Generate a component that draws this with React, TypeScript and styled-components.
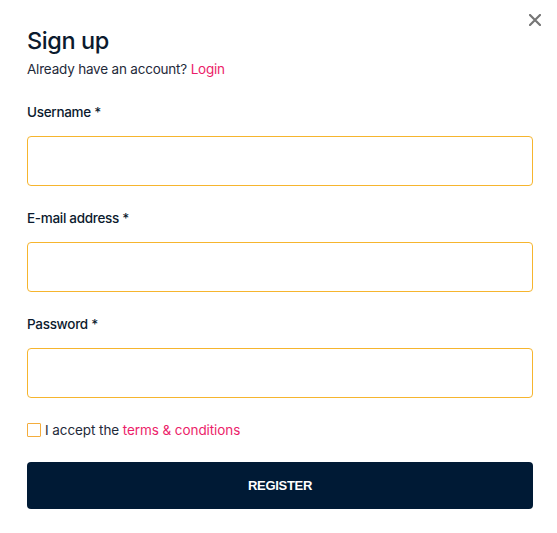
import React from 'react';
import styled, { createGlobalStyle } from 'styled-components';

const GlobalStyle = createGlobalStyle`
  html, body {
    margin: 0;
    padding: 0;
    background: #ffffff;
  }
  body {
    font-family: Inter, "Noto Sans", Arial, sans-serif;
    color: #0b1a2e;
  }
`;

const Modal = styled.div`
  position: relative;
  width: 557px;
  height: 533px;
  box-sizing: border-box;
  padding: 26px 24px 0 27px;
  background: #fff;
`;

const CloseButton = styled.button`
  position: absolute;
  top: 12px;
  right: 14px;
  width: 16px;
  height: 16px;
  padding: 0;
  border: none;
  background: transparent;
  display: flex;
  align-items: center;
  justify-content: center;
  cursor: pointer;
`;

const Title = styled.h1`
  margin: 0;
  font-size: 23.5px;
  font-weight: 500;
  line-height: 30px;
  color: #0b1a2e;
  letter-spacing: -0.4px;
`;

const Subtitle = styled.p`
  margin: 3px 0 0;
  font-size: 13.5px;
  line-height: 20px;
  letter-spacing: -0.2px;
  color: #1f2a3a;
`;

const PinkLink = styled.a`
  color: #ec1e6a;
  text-decoration: none;
  cursor: pointer;
`;

const Form = styled.form`
  display: flex;
  flex-direction: column;
  margin-top: 23px;
`;

const Field = styled.div`
  display: flex;
  flex-direction: column;
  gap: 14px;
  margin-bottom: 22px;
`;

const Label = styled.label`
  font-size: 13.5px;
  font-weight: 500;
  line-height: 20px;
  letter-spacing: -0.3px;
  color: #0b1a2e;
`;

const Input = styled.input`
  box-sizing: border-box;
  width: 100%;
  height: 50px;
  border: 1px solid #f6b52e;
  border-radius: 4px;
  padding: 0 12px;
  font-size: 14px;
  font-family: inherit;
  outline: none;
`;

const CheckRow = styled.label`
  display: flex;
  align-items: center;
  gap: 4px;
  font-size: 13.5px;
  line-height: 20px;
  letter-spacing: -0.08px;
  color: #1f2a3a;
`;

const Box = styled.span`
  display: inline-block;
  box-sizing: border-box;
  width: 14px;
  height: 14px;
  border: 1px solid #f4ad3d;
  border-radius: 1px;
  background: #fff;
`;

const RegisterButton = styled.button`
  margin-top: 22px;
  height: 47px;
  width: 100%;
  border: none;
  border-radius: 4px;
  background: #001a35;
  color: #ffffff;
  font-family: "Liberation Sans", Arial, sans-serif;
  font-size: 13px;
  font-weight: 700;
  letter-spacing: -0.3px;
  cursor: pointer;
`;

const fields = [
  { id: 'username', label: 'Username *', type: 'text' },
  { id: 'email', label: 'E-mail address *', type: 'email' },
  { id: 'password', label: 'Password *', type: 'password' },
];

export default function App() {
  return (
    <>
      <GlobalStyle />
      <Modal>
        <CloseButton aria-label="Close">
          <svg width="12" height="12" viewBox="0 0 12 12">
            <path d="M1 1 L11 11 M11 1 L1 11" stroke="#767676" strokeWidth="2.2" strokeLinecap="round" />
          </svg>
        </CloseButton>
        <Title>Sign up</Title>
        <Subtitle>
          Already have an account? <PinkLink>Login</PinkLink>
        </Subtitle>
        <Form onSubmit={(e) => e.preventDefault()}>
          {fields.map((f) => (
            <Field key={f.id}>
              <Label htmlFor={f.id}>{f.label}</Label>
              <Input id={f.id} type={f.type} />
            </Field>
          ))}
          <CheckRow>
            <Box />
            <span>
              I accept the <PinkLink>terms &amp; conditions</PinkLink>
            </span>
          </CheckRow>
          <RegisterButton type="submit">REGISTER</RegisterButton>
        </Form>
      </Modal>
    </>
  );
}
